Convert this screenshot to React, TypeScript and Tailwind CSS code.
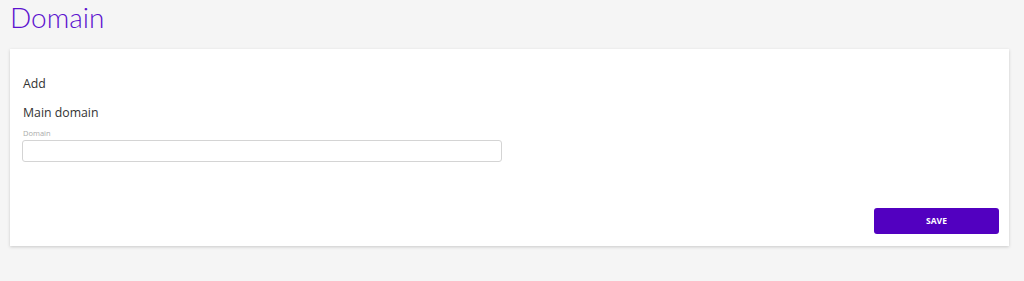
export default function App() {
  return (
    <div className="min-h-[281px] bg-[#f5f5f5] px-[10px] pt-[1px]" style={{ fontFamily: '"Open Sans", "Liberation Sans", sans-serif' }}>
      <h1 className="text-[28px] leading-[32px] text-[#5c12cf]" style={{ fontFamily: 'Lato, "Open Sans", sans-serif', fontWeight: 300 }}>
        Domain
      </h1>
      <div className="mt-[16px] h-[197px] w-[999px] bg-white shadow-[0_1px_3px_rgba(0,0,0,0.18)] flex flex-col pl-[12px] pr-[10px] pt-[26px] pb-[12px]">
        <div className="pl-[1px] text-[12.3px] leading-[18px] text-[#333]">Add</div>
        <div className="mt-[11px] pl-[1px] text-[12.3px] leading-[18px] text-[#333]">Main domain</div>
        <label className="mt-[6px] pl-[1px] text-[7.5px] leading-[10px] text-[#aaa]">Domain</label>
        <input className="mt-[2px] h-[22px] w-[480px] rounded-[3px] border border-[#d4d4d4] bg-white outline-none" />
        <div className="flex-1" />
        <div className="flex justify-end">
          <button className="h-[26px] w-[125px] rounded-[3px] bg-[#5200c0] text-[8.5px] font-bold text-white">SAVE</button>
        </div>
      </div>
    </div>
  );
}
